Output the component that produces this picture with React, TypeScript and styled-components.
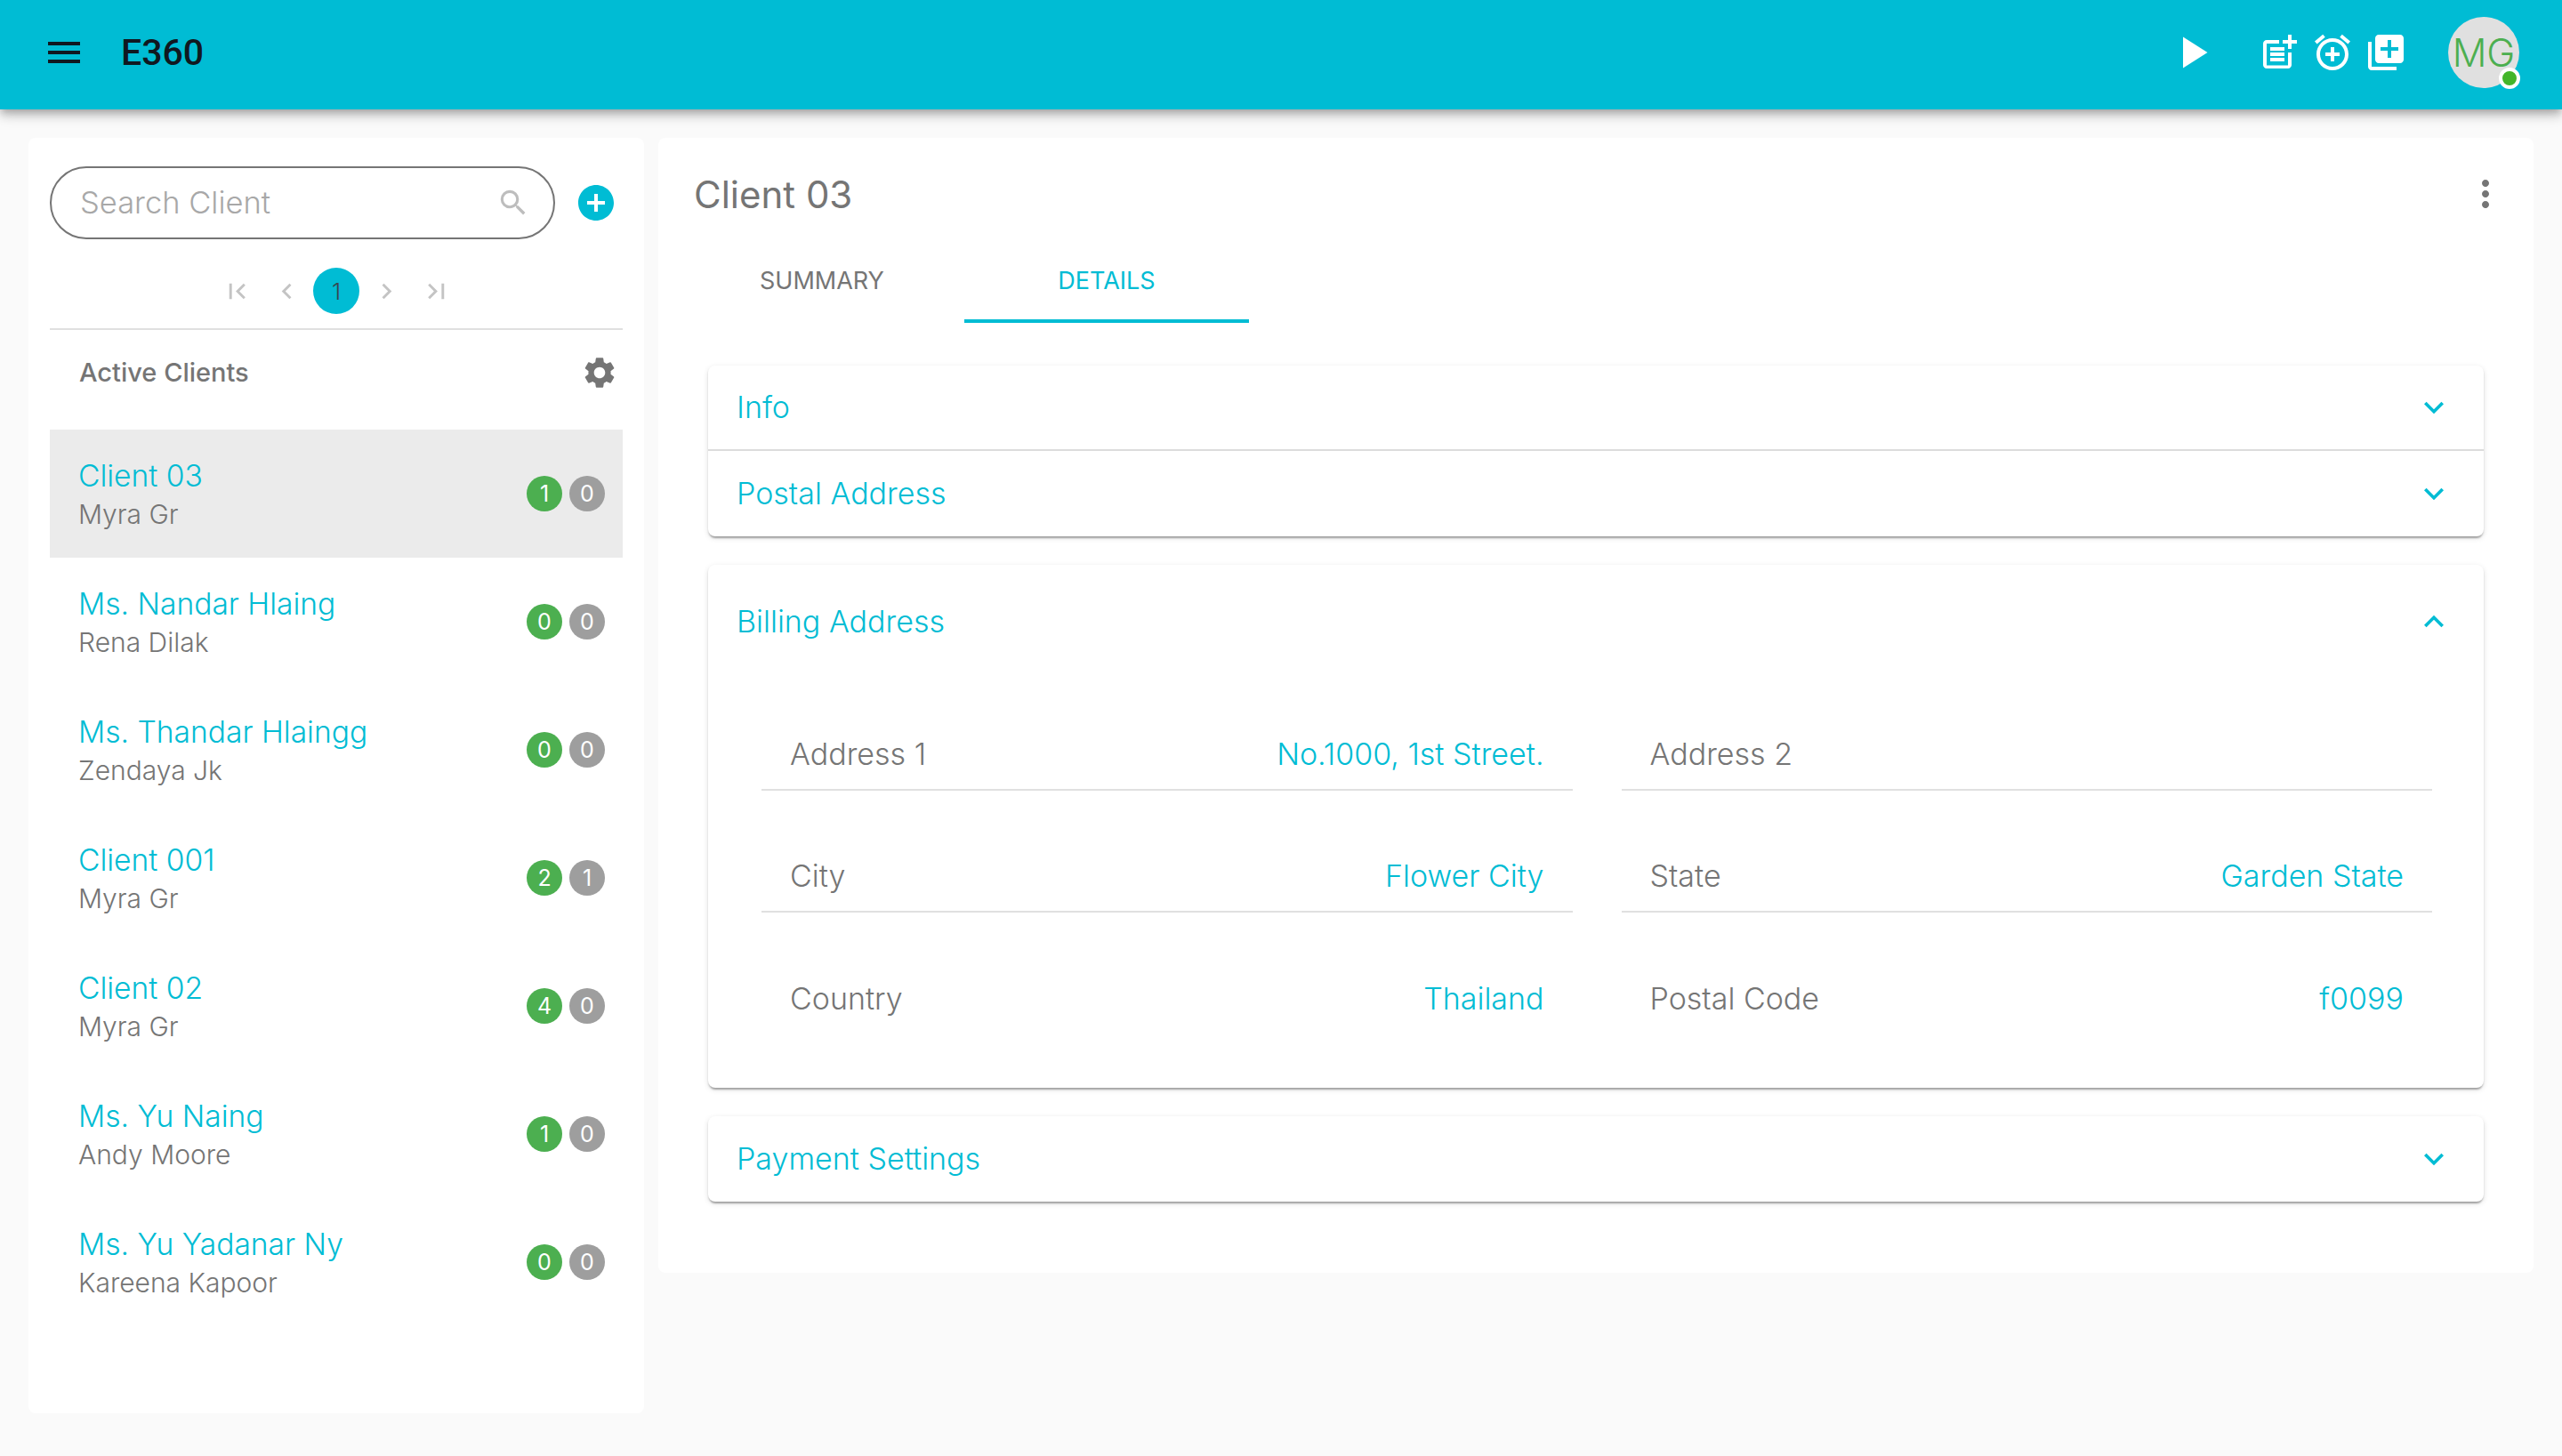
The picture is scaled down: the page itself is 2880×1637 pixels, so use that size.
import React from 'react';
import styled, { createGlobalStyle } from 'styled-components';
import {
  MdAddCircle,
  MdAlarmAdd,
  MdChevronLeft,
  MdChevronRight,
  MdExpandLess,
  MdExpandMore,
  MdFirstPage,
  MdLastPage,
  MdLibraryAdd,
  MdMenu,
  MdMoreVert,
  MdPlayArrow,
  MdPostAdd,
  MdSearch,
  MdSettings,
} from 'react-icons/md';

const cyan = '#00bcd4';
const grey = '#757575';
const bodyFont = '"Inter", "Noto Sans", sans-serif';

const GlobalStyle = createGlobalStyle`
  * {
    box-sizing: border-box;
  }

  body {
    margin: 0;
    background: #fafafa;
    font-family: ${bodyFont};
    font-weight: 300;
  }
`;

const clients = [
  { name: 'Client 03', owner: 'Myra Gr', open: 1, closed: 0 },
  { name: 'Ms. Nandar Hlaing', owner: 'Rena Dilak', open: 0, closed: 0 },
  { name: 'Ms. Thandar Hlaingg', owner: 'Zendaya Jk', open: 0, closed: 0 },
  { name: 'Client 001', owner: 'Myra Gr', open: 2, closed: 1 },
  { name: 'Client 02', owner: 'Myra Gr', open: 4, closed: 0 },
  { name: 'Ms. Yu Naing', owner: 'Andy Moore', open: 1, closed: 0 },
  { name: 'Ms. Yu Yadanar Ny', owner: 'Kareena Kapoor', open: 0, closed: 0 },
];

const billing = [
  { label: 'Address 1', value: 'No.1000, 1st Street.' },
  { label: 'Address 2', value: '' },
  { label: 'City', value: 'Flower City' },
  { label: 'State', value: 'Garden State' },
  { label: 'Country', value: 'Thailand' },
  { label: 'Postal Code', value: 'f0099' },
];

function App() {
  return (
    <Page>
      <GlobalStyle />
      <TopBar>
        <MenuButton>
          <MdMenu size={48} />
        </MenuButton>
        <Brand>E360</Brand>
        <TopActions>
          <PlayButton>
            <MdPlayArrow size={60} />
          </PlayButton>
          <MdPostAdd size={48} />
          <MdAlarmAdd size={48} />
          <MdLibraryAdd size={48} />
          <Avatar>
            MG
            <OnlineDot />
          </Avatar>
        </TopActions>
      </TopBar>

      <Content>
        <Sidebar>
          <SearchRow>
            <SearchBox>
              <SearchText>Search Client</SearchText>
              <MdSearch size={38} />
            </SearchBox>
            <AddButton>
              <MdAddCircle size={48} />
            </AddButton>
          </SearchRow>

          <Pager>
            <PageButton><MdFirstPage size={35} /></PageButton>
            <PageButton><MdChevronLeft size={35} /></PageButton>
            <PageButton $current>1</PageButton>
            <PageButton><MdChevronRight size={35} /></PageButton>
            <PageButton><MdLastPage size={35} /></PageButton>
          </Pager>

          <ListHeader>
            <ListTitle>Active Clients</ListTitle>
            <MdSettings size={42} />
          </ListHeader>

          {clients.map((client, index) => (
            <ClientRow key={client.name} $active={index === 0}>
              <ClientText>
                <ClientName>{client.name}</ClientName>
                <ClientOwner>{client.owner}</ClientOwner>
              </ClientText>
              <Badges>
                <Badge $color="#4caf50">{client.open}</Badge>
                <Badge $color="#9e9e9e">{client.closed}</Badge>
              </Badges>
            </ClientRow>
          ))}
        </Sidebar>

        <Main>
          <MainHeader>
            <MainTitle>Client 03</MainTitle>
            <MdMoreVert size={48} />
          </MainHeader>

          <Tabs>
            <Tab>SUMMARY</Tab>
            <Tab $selected>DETAILS</Tab>
          </Tabs>

          <Panels>
            <Panel>
              <PanelHead $height={94}>
                <PanelTitle>Info</PanelTitle>
                <MdExpandMore size={44} />
              </PanelHead>
              <PanelHead $height={98} $divided>
                <PanelTitle>Postal Address</PanelTitle>
                <MdExpandMore size={44} />
              </PanelHead>
            </Panel>

            <Panel>
              <PanelHead $height={128}>
                <PanelTitle>Billing Address</PanelTitle>
                <MdExpandLess size={44} />
              </PanelHead>
              <FieldGrid>
                {billing.map((field, index) => (
                  <Field key={field.label} $plain={index > 3}>
                    <FieldLabel>{field.label}</FieldLabel>
                    <FieldValue>{field.value}</FieldValue>
                  </Field>
                ))}
              </FieldGrid>
            </Panel>

            <Panel>
              <PanelHead $height={96}>
                <PanelTitle>Payment Settings</PanelTitle>
                <MdExpandMore size={44} />
              </PanelHead>
            </Panel>
          </Panels>
        </Main>
      </Content>
    </Page>
  );
}

export default App;

const Page = styled.div`
  min-height: 100vh;
  background: #fafafa;
`;

const TopBar = styled.header`
  position: relative;
  display: flex;
  align-items: center;
  height: 123px;
  padding: 0 48px 5px;
  background: ${cyan};
  box-shadow: 0 4px 8px -2px rgba(0, 0, 0, 0.2), 0 8px 10px rgba(0, 0, 0, 0.14), 0 2px 20px rgba(0, 0, 0, 0.12);
`;

const MenuButton = styled.div`
  display: flex;
  color: #101820;
`;

const Brand = styled.div`
  margin-left: 40px;
  font-family: "Roboto", sans-serif;
  font-size: 41px;
  font-weight: 500;
  color: #101820;
`;

const TopActions = styled.div`
  display: flex;
  align-items: center;
  gap: 12px;
  margin-left: auto;
  color: #fff;
`;

const PlayButton = styled.div`
  display: flex;
  margin-right: 32px;
`;

const Avatar = styled.div`
  position: relative;
  display: flex;
  align-items: center;
  justify-content: center;
  width: 80px;
  height: 80px;
  margin-left: 34px;
  border-radius: 50%;
  background: #e0e0e0;
  color: #4caf50;
  font-size: 43px;
  font-weight: 300;
`;

const OnlineDot = styled.span`
  position: absolute;
  right: -1px;
  bottom: -1px;
  width: 24px;
  height: 24px;
  border: 4px solid #fff;
  border-radius: 50%;
  background: #43b52a;
`;

const Content = styled.div`
  display: flex;
  align-items: flex-start;
  gap: 16px;
  padding: 32px;
`;

const Sidebar = styled.aside`
  flex: 0 0 692px;
  height: 1434px;
  padding: 32px 24px;
  border-radius: 8px;
  background: #fff;
`;

const SearchRow = styled.div`
  display: flex;
  align-items: center;
`;

const SearchBox = styled.div`
  display: flex;
  align-items: center;
  justify-content: space-between;
  width: 568px;
  height: 82px;
  padding: 0 26px 0 32px;
  border: 2px solid ${grey};
  border-radius: 41px;
  color: #bdbdbd;
`;

const SearchText = styled.span`
  padding-bottom: 2px;
  font-size: 34.5px;
  color: #a8a8a8;
`;

const AddButton = styled.div`
  display: flex;
  margin-left: 22px;
  color: ${cyan};
`;

const Pager = styled.div`
  display: flex;
  justify-content: center;
  gap: 4px;
  margin-top: 32px;
  padding-bottom: 16px;
  border-bottom: 2px solid #e0e0e0;
`;

const PageButton = styled.div<{ $current?: boolean }>`
  display: flex;
  align-items: center;
  justify-content: center;
  width: 52px;
  height: 52px;
  border-radius: 50%;
  background: ${(p) => (p.$current ? cyan : 'transparent')};
  color: ${(p) => (p.$current ? '#37474f' : '#c4c4c4')};
  font-size: 26px;
`;

const ListHeader = styled.div`
  display: flex;
  align-items: center;
  justify-content: space-between;
  height: 112px;
  padding: 0 5px 16px 33px;
  color: ${grey};
`;

const ListTitle = styled.div`
  padding-bottom: 2px;
  font-size: 29px;
  font-weight: 500;
`;

const ClientRow = styled.div<{ $active?: boolean }>`
  display: flex;
  align-items: center;
  justify-content: space-between;
  height: 144px;
  padding: 0 20px 0 32px;
  background: ${(p) => (p.$active ? '#ebebeb' : 'transparent')};
`;

const ClientText = styled.div`
  padding-top: 2px;
`;

const ClientName = styled.div`
  font-size: 33.6px;
  line-height: 44px;
  color: ${cyan};
`;

const ClientOwner = styled.div`
  font-size: 30px;
  line-height: 43px;
  color: ${grey};
`;

const Badges = styled.div`
  display: flex;
  gap: 8px;
`;

const Badge = styled.div<{ $color: string }>`
  display: flex;
  align-items: center;
  justify-content: center;
  width: 40px;
  height: 40px;
  border-radius: 50%;
  background: ${(p) => p.$color};
  color: #fff;
  font-size: 25px;
  font-weight: 400;
`;

const Main = styled.main`
  flex: 1;
  height: 1276px;
  padding: 0 56px;
  border-radius: 8px;
  background: #fff;
`;

const MainHeader = styled.div`
  display: flex;
  align-items: center;
  justify-content: space-between;
  height: 112px;
  margin: 0 -26px 0 -16px;
  padding-top: 14px;
  color: ${grey};
`;

const MainTitle = styled.h1`
  margin: 0;
  font-size: 42px;
  font-weight: 400;
`;

const Tabs = styled.div`
  display: flex;
  height: 96px;
  margin-left: -32px;
`;

const Tab = styled.div<{ $selected?: boolean }>`
  display: flex;
  align-items: center;
  justify-content: center;
  width: 320px;
  padding-top: 4px;
  border-bottom: 4px solid ${(p) => (p.$selected ? cyan : 'transparent')};
  color: ${(p) => (p.$selected ? cyan : grey)};
  font-size: 27px;
  font-weight: 400;
`;

const Panels = styled.div`
  display: flex;
  flex-direction: column;
  gap: 32px;
  margin-top: 48px;
`;

const Panel = styled.section`
  border-radius: 8px;
  background: #fff;
  box-shadow: 0 4px 2px -2px rgba(0, 0, 0, 0.2), 0 2px 2px rgba(0, 0, 0, 0.14), 0 2px 6px rgba(0, 0, 0, 0.12);
`;

const PanelHead = styled.div<{ $height: number; $divided?: boolean }>`
  display: flex;
  align-items: center;
  justify-content: space-between;
  height: ${(p) => p.$height}px;
  padding: 0 34px 0 32px;
  border-top: ${(p) => (p.$divided ? '2px solid #dcdcdc' : 'none')};
  color: ${cyan};
`;

const PanelTitle = styled.div`
  padding-bottom: 2px;
  font-size: 34px;
`;

const FieldGrid = styled.div`
  display: grid;
  grid-template-columns: 1fr 1fr;
  column-gap: 55px;
  row-gap: 55px;
  padding: 44px 58px 60px 60px;
`;

const Field = styled.div<{ $plain?: boolean }>`
  display: flex;
  align-items: center;
  justify-content: space-between;
  height: 82px;
  padding: 0 32px;
  border-bottom: ${(p) => (p.$plain ? 'none' : '2px solid #e0e0e0')};
  font-size: 34px;
`;

const FieldLabel = styled.span`
  color: ${grey};
`;

const FieldValue = styled.span`
  color: ${cyan};
`;
